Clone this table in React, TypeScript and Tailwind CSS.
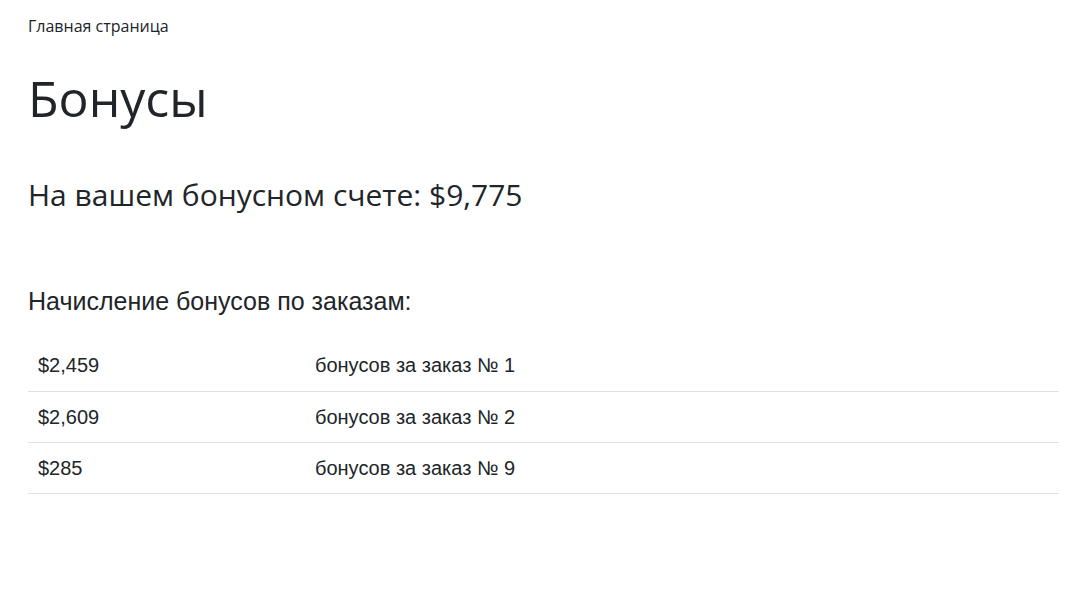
const rows = [
  { amount: '$2,459', order: 1 },
  { amount: '$2,609', order: 2 },
  { amount: '$285', order: 9 },
];

export default function App() {
  return (
    <div className="min-h-[604px] bg-white pl-[28px] pr-[26px] text-[#212529] font-['Open_Sans',sans-serif]">
      <nav className="pt-[14px] text-[16px] leading-[24px]">Главная страница</nav>

      <h1 className="mt-[30px] text-[50px] leading-[60px] font-normal">Бонусы</h1>

      <h2 className="mt-[49px] text-[30px] leading-[36px] font-normal">
        На вашем бонусном счете: $9,775
      </h2>

      <h3 className="mt-[73px] font-['Liberation_Sans',Arial,sans-serif] text-[25px] leading-[30px]">
        Начисление бонусов по заказам:
      </h3>

      <table className="mt-[24px] w-full border-collapse font-['Liberation_Sans',Arial,sans-serif] text-[20px]">
        <tbody>
          {rows.map((r) => (
            <tr key={r.order} className="border-b border-[#dee2e6]">
              <td className="w-[287px] h-[51px] px-[10px] align-middle">{r.amount}</td>
              <td className="h-[51px] px-0 align-middle">бонусов за заказ № {r.order}</td>
            </tr>
          ))}
        </tbody>
      </table>
    </div>
  );
}
